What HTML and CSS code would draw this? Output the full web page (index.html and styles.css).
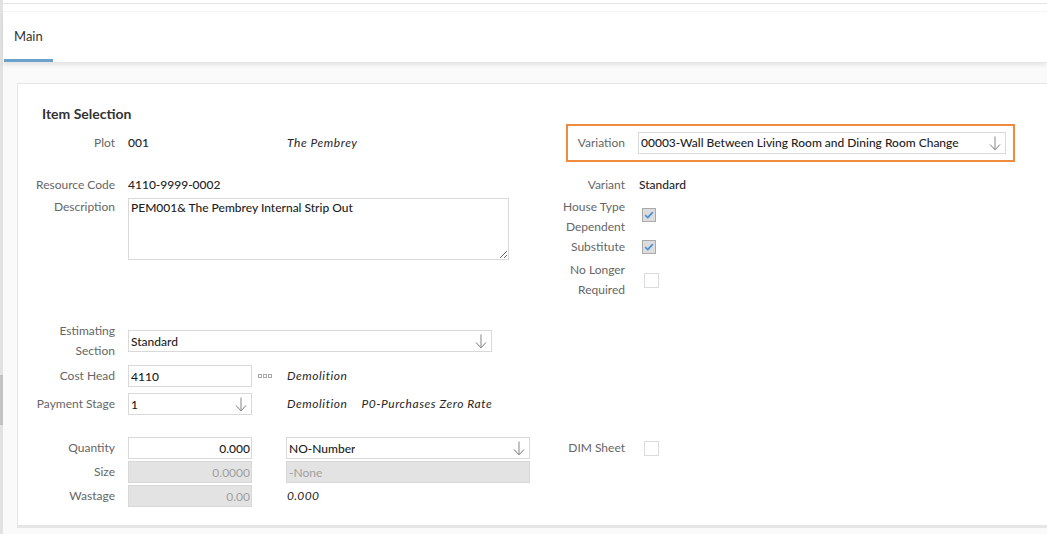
FILE: index.html
```html
<!DOCTYPE html>
<html>
<head>
<meta charset="utf-8">
<link rel="stylesheet" href="styles.css">
</head>
<body>
<div class="app">
  <div class="scrollbar"><div class="thumb"></div></div>
  <div class="main">
    <div class="topbar"><div class="topbar-line"></div></div>
    <div class="tabs"><div class="tab active">Main</div></div>
    <div class="content">
      <div class="card">
        <h2 class="card-title">Item Selection</h2>

        <div class="split top-split">
          <div class="col-left">
            <div class="row">
              <div class="lbl">Plot</div>
              <div class="val val-fixed">001</div>
              <div class="note">The Pembrey</div>
            </div>
          </div>
          <div class="col-right">
            <div class="highlight">
              <div class="lbl lbl-hl">Variation</div>
              <div class="select select-variation">
                <span class="select-text">00003-Wall Between Living Room and Dining Room Change</span>
                <svg class="arrow" width="12" height="15" viewBox="0 0 12 15"><line x1="6" y1="0.5" x2="6" y2="13.5" stroke="#b3b3b3" stroke-width="1.6"/><polyline points="1,8.5 6,13.8 11,8.5" fill="none" stroke="#7a7a7a" stroke-width="1"/></svg>
              </div>
            </div>
          </div>
        </div>

        <div class="split mid-split">
          <div class="col-left">
            <div class="row row-20">
              <div class="lbl">Resource Code</div>
              <div class="val">4110-9999-0002</div>
            </div>
            <div class="row row-top row-desc">
              <div class="lbl">Description</div>
              <textarea class="textarea">PEM001&amp; The Pembrey Internal Strip Out</textarea>
            </div>
          </div>
          <div class="col-right">
            <div class="row row-20">
              <div class="lbl lbl-r">Variant</div>
              <div class="val">Standard</div>
            </div>
            <div class="row row-gap2 row-top">
              <div class="lbl lbl-r">House Type<br>Dependent</div>
              <div class="check checked cb-house"><svg width="10" height="8" viewBox="0 0 10 8"><polyline points="1.2,4.2 3.8,6.6 8.8,1.2" fill="none" stroke="#4d8fd4" stroke-width="1.8"/></svg></div>
            </div>
            <div class="row row-20">
              <div class="lbl lbl-r">Substitute</div>
              <div class="check checked"><svg width="10" height="8" viewBox="0 0 10 8"><polyline points="1.2,4.2 3.8,6.6 8.8,1.2" fill="none" stroke="#4d8fd4" stroke-width="1.8"/></svg></div>
            </div>
            <div class="row row-gap3">
              <div class="lbl lbl-r">No Longer<br>Required</div>
              <div class="check empty"></div>
            </div>
          </div>
        </div>

        <div class="cost-block">
          <div class="row">
            <div class="lbl">Estimating<br>Section</div>
            <div class="select select-est">
              <span class="select-text">Standard</span>
              <svg class="arrow" width="12" height="15" viewBox="0 0 12 15"><line x1="6" y1="0.5" x2="6" y2="13.5" stroke="#b3b3b3" stroke-width="1.6"/><polyline points="1,8.5 6,13.8 11,8.5" fill="none" stroke="#7a7a7a" stroke-width="1"/></svg>
            </div>
          </div>
          <div class="row row-costhead">
            <div class="lbl">Cost Head</div>
            <div class="input input-small">4110</div>
            <div class="slot"><svg width="14" height="4" viewBox="0 0 14 4"><rect x="0.5" y="0.5" width="3" height="3" fill="none" stroke="#a8a8a8"/><rect x="5.5" y="0.5" width="3" height="3" fill="none" stroke="#a8a8a8"/><rect x="10.5" y="0.5" width="3" height="3" fill="none" stroke="#a8a8a8"/></svg></div>
            <div class="note">Demolition</div>
          </div>
          <div class="row row-payment">
            <div class="lbl">Payment Stage</div>
            <div class="select input-small">
              <span class="select-text">1</span>
              <svg class="arrow" width="12" height="15" viewBox="0 0 12 15"><line x1="6" y1="0.5" x2="6" y2="13.5" stroke="#b3b3b3" stroke-width="1.6"/><polyline points="1,8.5 6,13.8 11,8.5" fill="none" stroke="#7a7a7a" stroke-width="1"/></svg>
            </div>
            <div class="slot"></div>
            <div class="note">Demolition</div>
            <div class="note note-gap">P0-Purchases Zero Rate</div>
          </div>
        </div>

        <div class="split qty-split">
          <div class="col-left">
            <div class="row">
              <div class="lbl">Quantity</div>
              <div class="input input-small num">0.000</div>
              <div class="select select-unit">
                <span class="select-text">NO-Number</span>
                <svg class="arrow" width="12" height="15" viewBox="0 0 12 15"><line x1="6" y1="0.5" x2="6" y2="13.5" stroke="#b3b3b3" stroke-width="1.6"/><polyline points="1,8.5 6,13.8 11,8.5" fill="none" stroke="#7a7a7a" stroke-width="1"/></svg>
              </div>
            </div>
            <div class="row row-gap2">
              <div class="lbl">Size</div>
              <div class="input input-small num disabled">0.0000</div>
              <div class="input select-unit disabled">-None</div>
            </div>
            <div class="row row-gap2">
              <div class="lbl">Wastage</div>
              <div class="input input-small num disabled">0.00</div>
              <div class="note note-qty">0.000</div>
            </div>
          </div>
          <div class="col-right">
            <div class="row">
              <div class="lbl lbl-r">DIM Sheet</div>
              <div class="check empty cb-dim"></div>
            </div>
          </div>
        </div>
      </div>
    </div>
  </div>
</div>
</body>
</html>
```

FILE: styles.css
```css
* { box-sizing: border-box; }
html, body { margin: 0; padding: 0; }
body {
  font-family: Lato, "Open Sans", "Liberation Sans", sans-serif;
  font-size: 12px;
  color: #2e2e2e;
  background: #fafafa;
  overflow: hidden;
  height: 534px;
}
.app { display: flex; height: 534px; }
.scrollbar { width: 3px; flex: none; background: #e2e2e2; }
.scrollbar .thumb { margin-top: 375px; height: 50px; background: #c3c3c3; }
.main { flex: 1; min-width: 0; display: flex; flex-direction: column; }

.topbar { height: 11px; padding-top: 3px; background: #fff; }
.topbar-line { height: 1px; background: #e4e4e4; }

.tabs {
  position: relative;
  z-index: 1;
  height: 51px;
  background: #fff;
  border-top: 1px solid #f5f5f5;
  box-shadow: 0 3px 4px rgba(0, 0, 0, 0.09);
  display: flex;
}
.tab {
  margin-left: 1px;
  padding: 0 10px;
  display: flex;
  align-items: center;
  font-size: 13px;
  color: #333;
  border-bottom: 3px solid transparent;
}
.tab.active { border-bottom-color: #6ca2c9; }

.content { flex: 1; padding: 21px 0 0 14px; }
.card {
  background: #fff;
  border: 1px solid #e6e6e6;
  border-right: 0;
  border-bottom: 3px solid #e6e6e6;
  padding: 20px 0 18px 18px;
}
.card-title {
  margin: 0 0 0 6px;
  font-size: 14px;
  font-weight: 700;
  line-height: 20px;
  color: #333;
}

.split { display: flex; align-items: flex-start; }
.col-left { width: 520px; flex: none; }
.col-right { flex: 1; }

.row { display: flex; align-items: center; }
.row-top { align-items: flex-start; }
.row-20 { min-height: 20px; }
.row-gap2 { margin-top: 2px; }
.row-gap3 { margin-top: 3px; }

.lbl {
  width: 79px;
  margin-right: 13px;
  flex: none;
  text-align: right;
  line-height: 20px;
  color: #666;
  white-space: nowrap;
}
.lbl-r { width: 69px; margin-right: 14px; }
.lbl-hl { width: 57px; margin-right: 13px; }

.val { color: #262626; line-height: 20px; font-weight: 500; }
.val-fixed { width: 159px; flex: none; }
.note { font-style: italic; color: #262626; line-height: 20px; letter-spacing: 0.55px; }
.note-gap { margin-left: 14px; }
.note-qty { margin-left: 35px; letter-spacing: 0.3px; }

.top-split .col-left .row { height: 37px; }
.highlight {
  margin-left: 10px;
  width: 449px;
  border: 2px solid #ef8b3f;
  padding: 6px 7px 6px 0;
  display: flex;
  align-items: center;
}

.mid-split { margin-top: 13px; }
.row-desc { margin-top: 3px; }
.row-desc .lbl { margin-top: -1px; }
.textarea {
  width: 381px;
  height: 62px;
  border: 1px solid #d9d9d9;
  padding: 1px 2px;
  font-family: Lato, "Open Sans", "Liberation Sans", sans-serif;
  font-size: 12px;
  font-weight: 500;
  line-height: 15px;
  color: #1e1e1e;
  margin: 0;
  outline: none;
}

.check {
  width: 14px;
  height: 14px;
  flex: none;
  display: flex;
  align-items: center;
  justify-content: center;
  margin-left: 3px;
}
.check.checked { background: #dcdcdc; border: 1px solid #a9a9a9; }
.check.empty { width: 15px; height: 15px; background: #fff; border: 1px solid #dcdcdc; margin-left: 5px; }
.cb-house { margin-top: 11px; }
.cb-dim { margin-left: 6px; }

.select, .input {
  height: 22px;
  border: 1px solid #d9d9d9;
  background: #fff;
  display: flex;
  align-items: center;
  color: #1e1e1e;
  font-weight: 500;
  flex: none;
}
.select { justify-content: space-between; padding: 0 4px 0 2px; }
.select-text { white-space: nowrap; overflow: hidden; }
.select-variation .select-text { margin-top: -1px; }
.arrow { flex: none; }
.input { padding: 0 2px; }
.input.num { justify-content: flex-end; padding-right: 1px; }
.input.disabled { background: #e3e3e3; border-color: #d8d8d8; color: #a0a0a0; font-weight: 400; }

.select-variation { width: 368px; }
.select-est { width: 364px; }
.input-small { width: 124px; }
.select-unit { margin-left: 34px; width: 244px; }

.slot { width: 35px; flex: none; display: flex; padding-left: 6px; align-items: center; }

.cost-block { margin-top: 21px; }
.cost-block .row:first-child { height: 40px; }
.row-costhead { margin-top: 4px; }
.row-payment { margin-top: 6px; }

.qty-split { margin-top: 22px; }
.qty-split .col-right .row { height: 22px; }
```
